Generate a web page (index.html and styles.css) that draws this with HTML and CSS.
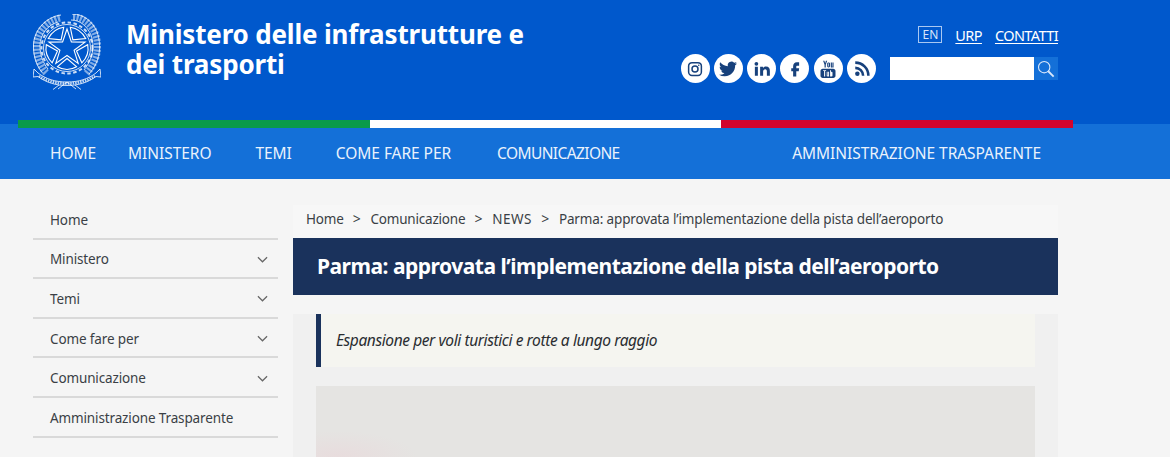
FILE: index.html
```html
<!DOCTYPE html>
<html lang="it">
<head>
    <meta charset="UTF-8">
    <meta name="viewport" content="width=device-width, initial-scale=1.0">
    <title>Ministero delle infrastrutture e dei trasporti</title>
    <link rel="stylesheet" href="styles.css">
</head>
<body>
    <header class="site-header">
        <div class="brand">
            <svg class="emblem" viewBox="0 0 68 76" fill="none" stroke="#fff" stroke-width="0.8">
                <!-- wreath -->
                <path d="M27 4C13 7 4 18 3.500 31c-.3 11 3 21 10 28" stroke-width="7" stroke-dasharray="2.200 1.300" opacity="0.5"/>
                <path d="M40 3c10 0 18 7 22 16 5 13 3 28-9 41" stroke-width="7" stroke-dasharray="2.200 1.300" opacity="0.5"/>
                <path d="M28 1C13 3 1 16 .5 31c-.3 11 3 21 9 28M25 8C15 11 7 20 7 32c0 9 3 17 8 23"/>
                <path d="M39 0c12 0 21 8 25 18 5 14 3 30-8 42M38 6c9 0 16 6 20 15 4 11 2 24-7 35"/>
                <!-- gear -->
                <circle cx="34" cy="34" r="25.500" stroke-width="2" stroke-dasharray="3.500 2.500" opacity="0.8"/>
                <circle cx="34" cy="34" r="23.500"/>
                <!-- star -->
                <path d="M34 15l4.400 12.900 13.700.2-11 8.200 4.100 13.100-11.200-7.900-11.200 7.900 4.100-13.100-11-8.200 13.700-.2z" stroke-width="1.100"/>
                <!-- wedges between the arms -->
                <path d="M34 44.500l9.500 8.200c-5.800 3.400-13.200 3.400-19 0zM43.500 37.100l11.200-6.400c1.200 6.500-1.100 13.500-5.900 18.100zM24.500 37.100l-11.200-6.400c-1.200 6.500 1.100 13.500 5.900 18.100zM39.900 25.900l-2.600-12.600c6.600 1 12.300 5.300 15.400 11.200zM28.100 25.900l2.600-12.600c-6.600 1-12.300 5.300-15.400 11.200z" stroke-width="1.100"/>
                <!-- ribbon -->
                <path d="M1 55l4 4c8 6 17 9 29 9s21-3 29-9l4-4 1 8-5-.5c-8 6-18 9-29 9s-21-3-29-9l-5 .5z"/>
                <path d="M6 62c8 5 17 7.500 28 7.500S54 67 62 62" stroke-width="2.600" stroke-dasharray="1.500 1" opacity="0.75"/>
                <path d="M26 71l-6 4.500M42 71l6 4.500M34 68l-9 7M34 68l9 7"/>
            </svg>
            <div class="brand-title">Ministero delle infrastrutture e dei&nbsp;trasporti</div>
        </div>
        <div class="header-tools">
            <div class="top-links">
                <a class="lang" href="#">EN</a>
                <a href="#">URP</a>
                <a href="#">CONTATTI</a>
            </div>
            <div class="tools-row">
                <div class="social">
                    <a href="#"><svg viewBox="0 0 24 24" fill="none" stroke="currentColor" stroke-width="2"><rect x="3.500" y="3.500" width="17" height="17" rx="4.500"/><circle cx="12" cy="12" r="4"/><circle cx="17" cy="7" r="1" fill="currentColor" stroke="none"/></svg></a>
                    <a href="#"><svg viewBox="0 0 24 24" fill="currentColor"><path d="M23.953 4.57a10 10 0 01-2.825.775 4.958 4.958 0 002.163-2.723c-.951.555-2.005.959-3.127 1.184a4.92 4.92 0 00-8.384 4.482C7.69 8.095 4.067 6.13 1.64 3.162a4.822 4.822 0 00-.666 2.475c0 1.71.87 3.213 2.188 4.096a4.904 4.904 0 01-2.228-.616v.06a4.923 4.923 0 003.946 4.827 4.996 4.996 0 01-2.212.085 4.936 4.936 0 004.604 3.417 9.867 9.867 0 01-6.102 2.105c-.39 0-.779-.023-1.17-.067a13.995 13.995 0 007.557 2.209c9.053 0 13.998-7.496 13.998-13.985 0-.21 0-.42-.015-.63A9.935 9.935 0 0024 4.59z"/></svg></a>
                    <a href="#"><svg viewBox="0 0 24 24" fill="currentColor"><circle cx="4.500" cy="5" r="2.500"/><rect x="2.500" y="9" width="4" height="12"/><path d="M9.500 9h3.800v1.700c.7-1.100 2.100-2 4-2 3.700 0 5.200 2.300 5.200 5.900V21h-4v-5.700c0-1.700-.5-3.100-2.200-3.100s-2.800 1.300-2.800 3.100V21h-4z"/></svg></a>
                    <a href="#"><svg viewBox="0 0 24 24" fill="currentColor"><path d="M14.500 7.500H17.500V3h-3C11.200 3 9.500 5.200 9.500 8.500V11H7v4h2.500v7h4.200v-7H17l.5-4h-3.800V8.500c0-.6.300-1 .8-1z"/></svg></a>
                    <a href="#"><svg viewBox="0 0 24 24" fill="currentColor"><path d="M5.500 1h1.700l1 3.200L9.200 1h1.700L9 6.200V10H7.400V6.200zM12.800 3.200c1.300 0 1.900.8 1.900 1.900v3c0 1.200-.7 1.900-1.900 1.900s-1.900-.7-1.900-1.900v-3c0-1.100.6-1.900 1.900-1.900zm0 1.200c-.3 0-.4.200-.4.500v3.400c0 .3.100.5.400.5s.4-.2.400-.5V4.900c0-.3-.1-.5-.4-.5zM15.700 3.300h1.500v5.300c0 .2.100.3.200.3.200 0 .4-.2.500-.4V3.300h1.500V10h-1.500v-.7c-.4.500-.8.800-1.300.8-.7 0-.9-.5-.9-1.200z"/><path fill-rule="evenodd" d="M5 11.500h14c1.700 0 3 1.300 3 3V21c0 1.700-1.300 3-3 3H5c-1.700 0-3-1.300-3-3v-6.500c0-1.700 1.300-3 3-3zm.5 2v1.200h1.300V22h1.400v-7.300h1.300v-1.200zm4.800 2.300V21c0 .7.300 1 .8 1 .4 0 .8-.2 1.100-.6v.5h1.200v-6.100h-1.200v4.700c-.2.200-.4.300-.5.300-.2 0-.2-.1-.2-.3v-4.700zm4.500-2.300V22H16v-.4c.3.300.6.500 1 .5.700 0 1-.5 1-1.300v-3.600c0-.8-.3-1.400-1-1.400-.4 0-.7.200-1 .5v-2.800z"/></svg></a>
                    <a href="#"><svg viewBox="0 0 24 24" fill="none" stroke="currentColor" stroke-width="3.400"><circle cx="5.800" cy="18.200" r="3" fill="currentColor" stroke="none"/><path d="M3 10.500c5.800 0 10.500 4.700 10.500 10.500M3 3.500c9.700 0 17.500 7.800 17.500 17.500"/></svg></a>
                </div>
                <form class="search">
                    <input class="search-input" type="text" aria-label="Cerca">
                    <button class="search-btn" type="button" aria-label="Cerca">
                        <svg viewBox="0 0 20 20" fill="none" stroke="#dbe9fb" stroke-width="1.200"><circle cx="8" cy="8" r="6.300"/><path d="M12.500 12.500l6 6" stroke-width="2"/></svg>
                    </button>
                </form>
            </div>
        </div>
    </header>

    <nav class="main-nav">
        <div class="flag"><span class="green"></span><span class="white"></span><span class="red"></span></div>
        <a href="#">HOME</a>
        <a href="#">MINISTERO</a>
        <a href="#">TEMI</a>
        <a class="nav-wide" href="#">COME FARE PER</a>
        <a class="nav-tight" href="#">COMUNICAZIONE</a>
        <a class="nav-right" href="#">AMMINISTRAZIONE TRASPARENTE</a>
    </nav>

    <div class="page">
        <aside class="side-menu">
            <a href="#">Home</a>
            <a href="#">Ministero<svg viewBox="0 0 12 7"><path d="M1 1l5 5 5-5"/></svg></a>
            <a href="#">Temi<svg viewBox="0 0 12 7"><path d="M1 1l5 5 5-5"/></svg></a>
            <a href="#">Come fare per<svg viewBox="0 0 12 7"><path d="M1 1l5 5 5-5"/></svg></a>
            <a href="#">Comunicazione<svg viewBox="0 0 12 7"><path d="M1 1l5 5 5-5"/></svg></a>
            <a href="#">Amministrazione Trasparente</a>
        </aside>
        <main class="content">
            <div class="breadcrumb">
                <a href="#">Home</a><span class="sep">&gt;</span>
                <a href="#">Comunicazione</a><span class="sep">&gt;</span>
                <a class="crumb-news" href="#">NEWS</a><span class="sep">&gt;</span>
                <a class="crumb-last" href="#">Parma: approvata l’implementazione della pista dell’aeroporto</a>
            </div>
            <h1 class="page-title">Parma: approvata l’implementazione della pista dell’aeroporto</h1>
            <article class="article">
                <blockquote class="lead">Espansione per voli turistici e rotte a lungo raggio</blockquote>
                <div class="photo"></div>
            </article>
        </main>
    </div>
</body>
</html>
```

FILE: styles.css
```css
* {
    box-sizing: border-box;
    margin: 0;
    padding: 0;
}

body {
    font-family: 'Noto Sans', sans-serif;
    background: #f5f5f5;
    color: #3a3f45;
}

a {
    color: inherit;
    text-decoration: none;
}

/* Header */
.site-header {
    height: 124px;
    background: #0058cc;
    color: #fff;
    display: flex;
    justify-content: space-between;
    padding: 14px 112px 0 33px;
}

.brand {
    display: flex;
    gap: 25px;
}

.emblem {
    width: 68px;
    height: 76px;
}

.brand-title {
    width: 410px;
    margin-top: 5px;
    font-size: 26px;
    line-height: 30px;
    font-weight: 700;
    letter-spacing: -0.17px;
}

.header-tools {
    display: flex;
    flex-direction: column;
    align-items: flex-end;
    gap: 11px;
    padding-top: 12px;
}

.top-links {
    display: flex;
    align-items: center;
    gap: 13px;
    height: 17px;
    font-size: 14.5px;
    letter-spacing: -0.6px;
}

.top-links a {
    text-decoration: underline;
    text-underline-offset: 2px;
}

.top-links .lang {
    width: 24px;
    height: 17px;
    border: 1px solid #a9c8f2;
    font-size: 12px;
    line-height: 15px;
    text-align: center;
    text-decoration: none;
    letter-spacing: 0;
    color: #d6e5fa;
}

.tools-row {
    display: flex;
    align-items: center;
    gap: 14px;
}

.social {
    display: flex;
    gap: 4.3px;
}

.social a {
    width: 29px;
    height: 29px;
    border-radius: 50%;
    background: #fff;
    color: #17417c;
    display: flex;
    align-items: center;
    justify-content: center;
}

.social svg {
    width: 18px;
    height: 18px;
}

.search {
    display: flex;
}

.search-input {
    width: 144px;
    height: 23px;
    border: 0;
    background: #fff;
}

.search-btn {
    width: 24px;
    height: 23px;
    border: 0;
    background: #1470d8;
    display: flex;
    align-items: center;
    justify-content: center;
}

.search-btn svg {
    width: 18px;
    height: 18px;
}

/* Nav */
.main-nav {
    position: relative;
    height: 55px;
    background: #1470d8;
    color: #eaf2fc;
    display: flex;
    align-items: center;
    padding: 3px 129px 0 50px;
    font-size: 15.5px;
    letter-spacing: -0.05px;
}

.main-nav a {
    margin-right: 44px;
}

.main-nav a:first-of-type {
    margin-right: 32px;
}

.main-nav .nav-wide {
    margin-right: 46px;
}

.main-nav .nav-tight {
    letter-spacing: -0.6px;
}

.main-nav .nav-right {
    margin: 0 0 0 auto;
}

.flag {
    position: absolute;
    top: -4px;
    left: 18px;
    width: 1055px;
    height: 8px;
    display: flex;
}

.flag span {
    flex: 1;
}

.green { background: #0a9a4a; }
.white { background: #fff; }
.red { background: #d2042d; }

/* Page */
.page {
    display: flex;
    gap: 15px;
    padding: 21px 112px 0 33px;
}

.side-menu {
    width: 245px;
    flex-shrink: 0;
    font-size: 13.5px;
    letter-spacing: -0.13px;
}

.side-menu a {
    height: 39.6px;
    padding: 2px 10px 0 17px;
    border-bottom: 2px solid #d9d9d9;
    display: flex;
    align-items: center;
    justify-content: space-between;
}

.side-menu svg {
    width: 11px;
    height: 7px;
    fill: none;
    stroke: #666;
    stroke-width: 1.3;
}

.content {
    flex: 1;
    margin-top: 5px;
}

.breadcrumb {
    height: 33px;
    padding: 0 0 6px 13px;
    background: #f7f7f7;
    display: flex;
    align-items: center;
    gap: 9.2px;
    font-size: 13.5px;
    letter-spacing: -0.2px;
}

.breadcrumb .sep {
    width: 8.5px;
    font-size: 14px;
}

.crumb-news {
    letter-spacing: 0.5px;
}

.crumb-last {
    letter-spacing: -0.14px;
}

.page-title {
    height: 57px;
    padding-left: 24px;
    background: #1a325c;
    color: #fff;
    font-size: 21px;
    line-height: 57px;
    font-weight: 700;
    letter-spacing: -0.5px;
    white-space: nowrap;
}

.article {
    margin-top: 19px;
    padding: 0 23px;
    background: #f0f0f0;
}

.lead {
    height: 53px;
    padding-left: 15px;
    background: #f5f5f0;
    border-left: 5px solid #1a325c;
    color: #2a2d30;
    font-size: 15.5px;
    line-height: 53px;
    font-style: italic;
    letter-spacing: -0.4px;
}

.photo {
    height: 71px;
    margin-top: 19px;
    background: radial-gradient(ellipse 80px 26px at 3% 100%, #e8dcdd, transparent), #e5e4e2;
}
```
